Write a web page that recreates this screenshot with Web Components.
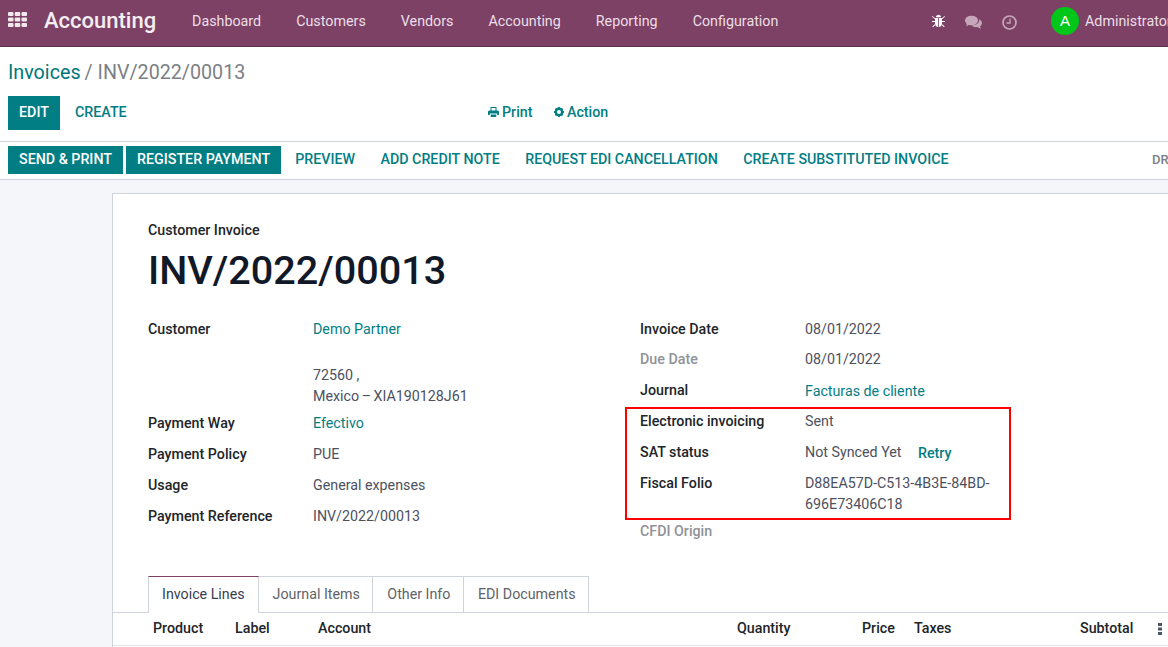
<!DOCTYPE html>
<html>
<head>
<meta charset="utf-8">
<title>INV/2022/00013</title>
<style>
  html, body { margin: 0; height: 647px; overflow: hidden; }
  body { font-family: Roboto, "Liberation Sans", sans-serif; font-size: 14.25px; color: #4c4c4c; background: #f5f6fa; }
</style>
</head>
<body>
<top-bar></top-bar>
<control-panel></control-panel>
<status-bar></status-bar>
<invoice-sheet>
  <field-group slot="left">
    <form-field label="Customer"><a-link>Demo Partner</a-link><addr-lines></addr-lines></form-field>
    <form-field label="Payment Way"><a-link>Efectivo</a-link></form-field>
    <form-field label="Payment Policy">PUE</form-field>
    <form-field label="Usage">General expenses</form-field>
    <form-field label="Payment Reference">INV/2022/00013</form-field>
  </field-group>
  <field-group slot="right">
    <form-field label="Invoice Date" style="min-height:30px">08/01/2022</form-field>
    <form-field label="Due Date" muted>08/01/2022</form-field>
    <form-field label="Journal"><a-link style="padding-top:1px">Facturas de cliente</a-link></form-field>
    <form-field label="Electronic invoicing">Sent</form-field>
    <form-field label="SAT status">Not Synced Yet <retry-link>Retry</retry-link></form-field>
    <form-field label="Fiscal Folio">D88EA57D-C513-4B3E-84BD-696E73406C18</form-field>
    <form-field label="CFDI Origin" muted></form-field>
  </field-group>
</invoice-sheet>

<script>
class topBar extends HTMLElement {
  constructor() {
    super();
    this.shadowDOM = this.attachShadow({ mode: "open" });
  }
  connectedCallback() {
    const menus = ["Dashboard", "Customers", "Vendors", "Accounting", "Reporting", "Configuration"];
    this.shadowDOM.innerHTML = `
      <style>
        :host { display: flex; align-items: center; height: 47px; padding-bottom: 5px; background: #7c4164; border-bottom: 1px solid #5d3049; color: #fff; box-sizing: border-box; white-space: nowrap; overflow: hidden; }
        .apps { margin: 0 0 2px 8px; width: 19px; height: 15px; display: block; flex: none; }
        .brand { margin-left: 17px; font-size: 22px; font-weight: 500; color: #f4eef2; width: 130px; flex: none; }
        nav { display: flex; gap: 35px; margin-left: 18px; font-size: 14.3px; color: #ecdfe8; }
        .icons { display: flex; align-items: center; margin-left: auto; }
        .ic { display: block; flex: none; }
        .low { margin: 4px 0 0 20px; }
        .avatar { width: 28px; height: 28px; border-radius: 50%; background: #00c61a; color: #fff; display: flex; align-items: center; justify-content: center; font: 15px "Liberation Sans", sans-serif; flex: none; margin-left: 34px; }
        .user { margin-left: 6px; font-size: 14.3px; color: #ecdfe8; width: 83px; flex: none; overflow: hidden; }
      </style>
      <svg class="apps" viewBox="0 0 19 15" fill="#f2e9ee">
        <rect x="0" y="0" width="5.500" height="4" rx="1"/><rect x="6.750" y="0" width="5.500" height="4" rx="1"/><rect x="13.500" y="0" width="5.500" height="4" rx="1"/>
        <rect x="0" y="5.500" width="5.500" height="4" rx="1"/><rect x="6.750" y="5.500" width="5.500" height="4" rx="1"/><rect x="13.500" y="5.500" width="5.500" height="4" rx="1"/>
        <rect x="0" y="11" width="5.500" height="4" rx="1"/><rect x="6.750" y="11" width="5.500" height="4" rx="1"/><rect x="13.500" y="11" width="5.500" height="4" rx="1"/>
      </svg>
      <div class="brand">Accounting</div>
      <nav>${menus.map((m) => `<span>${m}</span>`).join("")}</nav>
      <div class="icons">
        <svg class="ic" width="13" height="14" viewBox="0 0 13 14" fill="#fff">
          <path d="M4 3.200C4 1.800 5 .8 6.500 .8S9 1.800 9 3.200z"/>
          <path d="M3 4h3.100v9C4.300 12.800 3 11.400 3 9.500zM6.900 4H10v5.500c0 1.900-1.300 3.300-3.100 3.500z"/>
          <path d="M.6 1.900l2.600 2.500-.6.6L0 2.500zM12.400 1.900L9.800 4.400l.6.6L13 2.500zM0 7h3v1H0zM10 7h3v1h-3zM2.700 10.200l.6.7L1 13.200l-.7-.7zM10.300 10.200l-.6.7 2.300 2.300.7-.7z"/>
        </svg>
        <svg class="ic low" width="17" height="15" viewBox="0 0 17 15" fill="#c6a7b9">
          <ellipse cx="6.500" cy="5.500" rx="6.500" ry="4.800"/>
          <path d="M2 8l-.8 3.200L5.500 9z"/>
          <path d="M14.200 4.200c1.700.9 2.800 2.300 2.800 3.800 0 1.300-.8 2.500-2 3.300l.9 2.700-3.700-1.900c-2.300.3-4.600-.4-5.700-1.800 3.900.2 8.300-2 7.700-6.100z"/>
        </svg>
        <svg class="ic low" width="15" height="15" viewBox="0 0 15 15" fill="none" stroke="#c6a7b9">
          <circle cx="7.500" cy="7.500" r="6.500" stroke-width="1.700"/>
          <path d="M8 3.500v4.500H4.500" stroke-width="1.300"/>
        </svg>
        <div class="avatar">A</div>
        <div class="user">Administrator</div>
      </div>
    `;
  }
}
customElements.define("top-bar", topBar);

class controlPanel extends HTMLElement {
  constructor() {
    super();
    this.shadowDOM = this.attachShadow({ mode: "open" });
  }
  connectedCallback() {
    this.shadowDOM.innerHTML = `
      <style>
        :host { display: block; height: 94px; background: #fff; padding: 0 8px; box-sizing: border-box; }
        .crumb { height: 49px; display: flex; align-items: center; padding-top: 2px; box-sizing: border-box; font-size: 19.700px; color: #7c7f86; }
        .crumb b { font-weight: 400; color: #00777a; margin-right: 4px; }
        .row { display: flex; align-items: center; font-weight: 500; height: 34px; }
        .row > * { padding-bottom: 2px; box-sizing: border-box; }
        .edit { width: 52px; height: 34px; background: #017e84; color: #fff; display: flex; align-items: center; justify-content: center; }
        .create { margin-left: 15px; color: #017e84; width: 413px; }
        .act { display: inline-flex; align-items: center; gap: 3px; color: #017e84; }
        .act + .act { margin-left: 21.500px; }
      </style>
      <div class="crumb"><b>Invoices</b> / INV/2022/00013</div>
      <div class="row">
        <div class="edit">EDIT</div>
        <div class="create">CREATE</div>
        <span class="act">
          <svg width="11" height="10" viewBox="0 0 11 10" fill="#017e84"><path d="M2.500 0H8.500v3.500H7.500V1H3.500v2.500h-1zM0 5c0-1 .7-1.500 1.500-1.500h8C10.300 3.500 11 4 11 5v3H9.200V6.500H1.800V8H0zM2.700 7.500h5.600V10H2.700z"/></svg>
          Print</span>
        <span class="act">
          <svg width="10" height="10" viewBox="0 0 10 10"><circle cx="5" cy="5" r="3.200" fill="none" stroke="#017e84" stroke-width="2.400"/><path d="M5 0v2M5 8v2M0 5h2M8 5h2M1.500 1.500l1.400 1.400M7.100 7.100l1.400 1.400M8.500 1.500L7.100 2.900M2.900 7.100L1.500 8.500" stroke="#017e84" stroke-width="1.800"/></svg>
          Action</span>
      </div>
    `;
  }
}
customElements.define("control-panel", controlPanel);

class statusBar extends HTMLElement {
  constructor() {
    super();
    this.shadowDOM = this.attachShadow({ mode: "open" });
  }
  connectedCallback() {
    const links = ["PREVIEW", "ADD CREDIT NOTE", "REQUEST EDI CANCELLATION", "CREATE SUBSTITUTED INVOICE"];
    this.shadowDOM.innerHTML = `
      <style>
        :host { display: flex; align-items: flex-start; height: 39px; box-sizing: border-box; background: #fff; border-top: 1px solid #ced4da; border-bottom: 1px solid #ced4da; padding: 4px 0 0 8px; font-weight: 500; white-space: nowrap; overflow: hidden; }
        .btn { height: 28px; line-height: 27px; background: #017e84; color: #fff; padding: 0 11px; margin-right: 3px; }
        .lnk { color: #017e84; line-height: 27px; margin-left: 11px; margin-right: 14.400px; }
        .state { margin-left: auto; color: #7c7f86; font-size: 13px; line-height: 27px; width: 16px; overflow: hidden; }
      </style>
      <div class="btn">SEND &amp; PRINT</div>
      <div class="btn">REGISTER PAYMENT</div>
      ${links.map((l) => `<div class="lnk">${l}</div>`).join("")}
      <div class="state">DRAFT</div>
    `;
  }
}
customElements.define("status-bar", statusBar);

class invoiceSheet extends HTMLElement {
  constructor() {
    super();
    this.shadowDOM = this.attachShadow({ mode: "open" });
  }
  connectedCallback() {
    const cols = ["Product", "Label", "Account", "Quantity", "Price", "Taxes", "Subtotal"];
    this.shadowDOM.innerHTML = `
      <style>
        :host { display: block; position: relative; margin: 13px 0 0 112px; height: 460px; background: #fff; border: 1px solid #ced4da; border-right: 0; box-sizing: border-box; overflow: hidden; }
        .type { margin: 27px 0 0 35px; font-weight: 500; color: #212529; line-height: 18px; }
        h1 { margin: 9px 0 0 35px; font-size: 39.600px; font-weight: 500; line-height: 46px; color: #111827; }
        .groups { display: grid; grid-template-columns: 492px 1fr; margin: 25px 0 0 35px; height: 257px; }
        .tabs { display: flex; margin-left: 35px; height: 36px; }
        .tab { padding: 0 12.500px 2px 14px; display: flex; align-items: center; color: #5f636a; border: 1px solid #ced4da; border-left: 0; border-bottom: 0; box-sizing: border-box; }
        .tab.on { padding: 0 13px 2px; color: #374151; border-left: 1px solid #ced4da; border-top: 1px solid #7c4164; background: #fff; height: 37px; position: relative; z-index: 1; }
        .heads { display: grid; grid-template-columns: 82px 83px 419px 125px 52px 166px 1fr; align-items: center; padding: 0 0 2px 40px; height: 34px; border-top: 1px solid #ced4da; border-bottom: 1px solid #dee2e6; font-weight: 500; color: #212529; box-sizing: border-box; position: relative; white-space: nowrap; }
        .dots { position: absolute; right: 6px; top: 10px; width: 4px; height: 12px; display: block; }
        .mark { position: absolute; left: 512px; top: 213px; width: 386px; height: 113px; box-sizing: border-box; border: 2px solid #f00; pointer-events: none; }
      </style>
      <div class="type">Customer Invoice</div>
      <h1>INV/2022/00013</h1>
      <div class="groups"><slot name="left"></slot><slot name="right"></slot></div>
      <div class="tabs">
        <div class="tab on">Invoice Lines</div>
        <div class="tab">Journal Items</div>
        <div class="tab">Other Info</div>
        <div class="tab">EDI Documents</div>
      </div>
      <div class="heads">
        ${cols.map((c) => `<span>${c}</span>`).join("")}
        <svg class="dots" viewBox="0 0 4 12" fill="#4b5563"><rect width="4" height="3" y="0"/><rect width="4" height="3" y="4.500"/><rect width="4" height="3" y="9"/></svg>
      </div>
      <div class="mark"></div>
    `;
  }
}
customElements.define("invoice-sheet", invoiceSheet);

class fieldGroup extends HTMLElement {
  constructor() {
    super();
    this.attachShadow({ mode: "open" }).innerHTML = `
      <style>:host { display: block; }</style><slot></slot>`;
  }
}
customElements.define("field-group", fieldGroup);

class formField extends HTMLElement {
  constructor() {
    super();
    this.shadowDOM = this.attachShadow({ mode: "open" });
  }
  connectedCallback() {
    const muted = this.hasAttribute("muted");
    this.shadowDOM.innerHTML = `
      <style>
        :host { display: grid; grid-template-columns: 165px 190px; align-content: start; line-height: 21px; padding-bottom: 6px; min-height: 31px; box-sizing: border-box; }
        .lab { font-weight: 500; color: ${muted ? "#8f9299" : "#212529"}; }
        .val { color: #4c5160; }
      </style>
      <div class="lab">${this.getAttribute("label")}</div>
      <div class="val"><slot></slot></div>
    `;
  }
}
customElements.define("form-field", formField);

class aLink extends HTMLElement {
  constructor() {
    super();
    this.attachShadow({ mode: "open" }).innerHTML = `
      <style>:host { display: block; color: #017e84; }</style><slot></slot>`;
  }
}
customElements.define("a-link", aLink);

class retryLink extends HTMLElement {
  constructor() {
    super();
    this.attachShadow({ mode: "open" }).innerHTML = `
      <style>:host { display: inline-block; color: #017e84; font-weight: 500; margin-left: 13px; vertical-align: -1px; }</style><slot></slot>`;
  }
}
customElements.define("retry-link", retryLink);

class addrLines extends HTMLElement {
  constructor() {
    super();
    this.attachShadow({ mode: "open" }).innerHTML = `
      <style>:host { display: block; padding-top: 25px; }</style>
      <div>72560 ,</div><div style="white-space:nowrap;word-spacing:-1px">Mexico – XIA190128J61</div>`;
  }
}
customElements.define("addr-lines", addrLines);
</script>
</body>
</html>
